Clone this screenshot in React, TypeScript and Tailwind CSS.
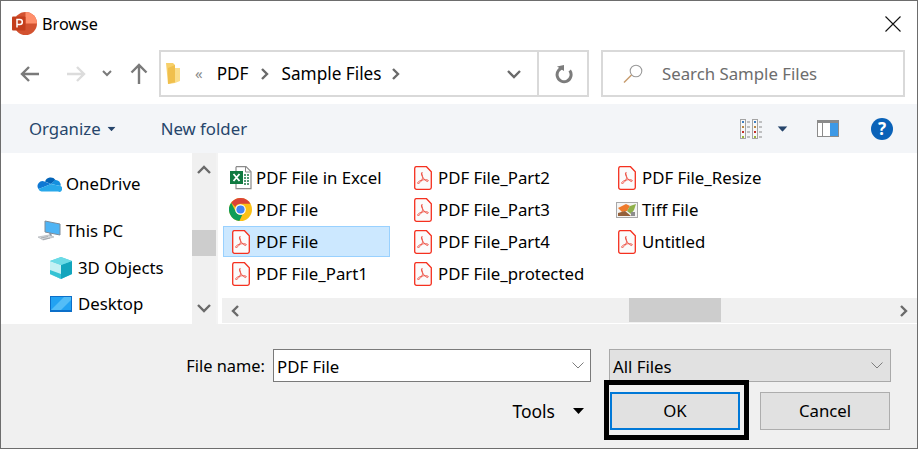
import type { ReactNode } from "react";

const font = "font-['Noto_Sans','Open_Sans',sans-serif]";

type FileEntry = { name: string; icon: "pdf" | "excel" | "chrome" | "tiff"; selected?: boolean };

const files: FileEntry[] = [
  { name: "PDF File in Excel", icon: "excel" },
  { name: "PDF File", icon: "chrome" },
  { name: "PDF File", icon: "pdf", selected: true },
  { name: "PDF File_Part1", icon: "pdf" },
  { name: "PDF File_Part2", icon: "pdf" },
  { name: "PDF File_Part3", icon: "pdf" },
  { name: "PDF File_Part4", icon: "pdf" },
  { name: "PDF File_protected", icon: "pdf" },
  { name: "PDF File_Resize", icon: "pdf" },
  { name: "Tiff File", icon: "tiff" },
  { name: "Untitled", icon: "pdf" },
];

function PdfIcon() {
  return (
    <svg width="18" height="24" viewBox="0 0 18 24" fill="none">
      <path d="M2 .7h10.500l4.800 5V21.500a1.800 1.800 0 0 1-1.800 1.800H2.500A1.800 1.800 0 0 1 .7 21.500V2.500A1.800 1.800 0 0 1 2 .7Z" fill="#fbfbfb" stroke="#f5301f" strokeWidth="1.300" />
      <path d="M8.200 6.500c-1 0-1 1.500.1 4 1 2.300-1.900 6.300-3.800 7-1.400.5-1.100-1.300.7-2.300 2.400-1.300 6.100-2 8.300-1.200 1.600.6.700 1.800-.6 1.300-1.800-.6-3.700-3-4.400-5-.6-1.800-.9-3.800-.3-3.800Z" stroke="#ec4a3c" strokeWidth=".9" />
    </svg>
  );
}

function ExcelIcon() {
  return (
    <svg width="22" height="24" viewBox="0 0 22 24" fill="none">
      <path d="M6 .7h10l5 5v17H6v-5M6 7V.7" fill="#fff" stroke="#8a8a8a" strokeWidth="1.200" />
      <path d="M15.500 1v5h5" stroke="#8a8a8a" />
      <path d="M14 9h5M14 12h5M14 15h5M14 18h5" stroke="#1f7a4a" strokeWidth="1.600" strokeDasharray="2 1" />
      <rect x="0" y="5" width="13" height="13" fill="#107a41" />
      <path d="M3.500 8l6 7M9.500 8l-6 7" stroke="#fff" strokeWidth="1.800" />
    </svg>
  );
}

function ChromeIcon() {
  return (
    <svg width="23" height="23" viewBox="0 0 24 24">
      <circle cx="12" cy="12" r="12" fill="#fbc116" />
      <path d="M12 0a12 12 0 0 1 10.400 6H12a6 6 0 0 0-5.400 3.400L2.300 4.900A12 12 0 0 1 12 0Z" fill="#db4437" />
      <path d="M2.300 4.900l4.500 8.800A6 6 0 0 0 13.800 17.700L10.800 23.900A12 12 0 0 1 2.300 4.900Z" fill="#0f9d58" />
      <circle cx="12" cy="12" r="5.500" fill="#fff" />
      <circle cx="12" cy="12" r="4.300" fill="#4285f4" />
    </svg>
  );
}

function TiffIcon() {
  return (
    <svg width="22" height="16" viewBox="0 0 22 16">
      <rect x=".5" y=".5" width="21" height="15" fill="#f4f4f4" stroke="#a8a8a8" />
      <path d="M2 6l8-4 4 2-3 5-5 1Z" fill="#ee7a2b" />
      <path d="M11 9l3-5 6-2-2 6-3 4Z" fill="#8fb04a" />
      <path d="M2 14v-3l7-2 6 5Z" fill="#94603a" />
      <rect x="15" y="10" width="4" height="4" fill="#8d8d8d" />
    </svg>
  );
}

function FileIcon({ kind }: { kind: FileEntry["icon"] }) {
  if (kind === "excel") return <ExcelIcon />;
  if (kind === "chrome") return <ChromeIcon />;
  if (kind === "tiff") return <TiffIcon />;
  return <PdfIcon />;
}

function FileRow({ file }: { file: FileEntry }) {
  const box = file.selected ? "border-[#99d1ff] bg-[#cce8ff]" : "border-transparent";
  return (
    <div className={`flex h-[31px] w-[167px] items-center border pr-1 text-[16.800px] whitespace-nowrap text-black ${box}`}>
      <div className="flex w-[32px] shrink-0 justify-center pl-[1px]">
        <FileIcon kind={file.icon} />
      </div>
      <span className="mt-[1px]">{file.name}</span>
    </div>
  );
}

function OneDriveIcon() {
  return (
    <svg width="25" height="16" viewBox="0 0 25 16">
      <path d="M8 5.500a6 6 0 0 1 10.500-1.500L14 8l-6-2.500Z" fill="#0364b8" />
      <path d="M7.500 5.500A5 5 0 0 0 1.500 13L8 10.500l6-2.500-6.500-2.500Z" fill="#0f78d4" />
      <path d="M18 4a5 5 0 0 1 5.500 6L14 8l4-4Z" fill="#1490df" />
      <path d="M1.500 13A3.500 3.500 0 0 0 4.500 15.500H21a3 3 0 0 0 2.500-5.500L14 8Z" fill="#28a8ea" />
    </svg>
  );
}

function ThisPcIcon() {
  return (
    <svg width="24" height="22" viewBox="0 0 24 22">
      <path d="M8 1l15 3v11L8 12Z" fill="#4eb4f5" stroke="#7f8c99" />
      <path d="M13 13l1 3" stroke="#8a96a3" strokeWidth="2" />
      <path d="M1 17l11-2 5 2-11 3Z" fill="#d6d9dc" stroke="#a6abb0" strokeWidth=".6" />
      <path d="M4 18l7-1.500M6 19.500l7-1.500" stroke="#9aa0a6" strokeWidth=".8" />
    </svg>
  );
}

function ObjectsIcon() {
  return (
    <svg width="22" height="22" viewBox="0 0 22 22">
      <path d="M11 0l11 4v13l-11 5L0 17V4Z" fill="#4fd0e0" />
      <path d="M0 4l11 4v14L0 17Z" fill="#c4f1f4" />
      <path d="M11 8l11-4v13l-11 5Z" fill="#12a5bd" />
      <path d="M0 13l11 4v5L0 17Z" fill="#35c3d4" />
      <path d="M11 0l11 4-11 4L0 4Z" fill="#6cdbe6" />
    </svg>
  );
}

function DesktopIcon() {
  return (
    <svg width="22" height="16" viewBox="0 0 22 16">
      <rect width="22" height="16" fill="#0c6fc9" />
      <rect x="1" y="1" width="20" height="13" fill="#22a2f2" />
      <path d="M1 14L14 1h7v3L11 14Z" fill="#53bdf7" />
    </svg>
  );
}

function NavItem({ icon, label, box }: { icon: ReactNode; label: string; box: string }) {
  return (
    <div className={`flex items-center text-[16.800px] whitespace-nowrap text-black ${box}`}>
      {icon}
      <span>{label}</span>
    </div>
  );
}

function Chevron({ d, size = 14 }: { d: string; size?: number }) {
  return (
    <svg width={size} height={size} viewBox="0 0 14 14" fill="none">
      <path d={d} stroke="#6a6a6a" strokeWidth="2.400" />
    </svg>
  );
}

function NavArrow({ d, color, className }: { d: string; color: string; className: string }) {
  return (
    <svg className={className} width="22" height="22" viewBox="0 0 22 22" fill="none">
      <path d={d} stroke={color} strokeWidth="2.400" />
    </svg>
  );
}

function Caret({ color, className }: { color: string; className?: string }) {
  return (
    <svg className={className} width="11" height="6" viewBox="0 0 11 6">
      <path d="M0 0h11L5.500 6Z" fill={color} />
    </svg>
  );
}

function SmallDown() {
  return (
    <svg width="12" height="7" viewBox="0 0 12 7" fill="none">
      <path d="M.5.500l5.500 5.500 5.500-5.500" stroke="#7d7d7d" />
    </svg>
  );
}

function ViewsIcon() {
  const rows = ["#3f7fc0", "#b88746", "#c4302b", "#9ab53c"];
  return (
    <svg width="23" height="20" viewBox="0 0 23 20" fill="none">
      {[0, 12].map((x) => (
        <g key={x}>
          <rect x={x + 0.5} y=".5" width="5" height="19" fill="#f8f8f8" stroke="#a4a4a4" />
          {rows.map((c, i) => (
            <g key={c}>
              <rect x={x + 2} y={2 + i * 5} width="2" height="2" fill={c} />
              <path d={`M${x + 7} ${3 + i * 5}h3`} stroke="#8a8a8a" />
            </g>
          ))}
        </g>
      ))}
    </svg>
  );
}

function PaneIcon() {
  return (
    <svg width="22" height="17" viewBox="0 0 22 17">
      <rect x=".5" y=".500" width="21" height="16" fill="#fff" stroke="#8b8b8b" />
      <rect x="1" y="1" width="20" height="2" fill="#8b8b8b" />
      <rect x="5" y="3" width="1" height="13" fill="#8b8b8b" />
      <rect x="13" y="3" width="8" height="13" fill="#3d99e6" />
    </svg>
  );
}

export default function App() {
  return (
    <div className={`flex h-[449px] w-[918px] flex-col overflow-hidden border border-[#6d6d6d] bg-white ${font}`}>
      {/* title bar */}
      <div className="flex h-[45px] shrink-0 items-center justify-between pr-[16px] pl-[11px]">
        <div className="flex items-center gap-[5px]">
          <svg width="25" height="23" viewBox="0 0 25 23">
            <circle cx="13.500" cy="11.500" r="11.500" fill="#d35230" />
            <path d="M13.500 0A11.500 11.500 0 0 1 25 11.500H13.500Z" fill="#ff8f6b" />
            <rect y="4.500" width="13.500" height="14" rx="1" fill="#c43e1c" />
            <path d="M5 15.500v-8h2.800a2.400 2.400 0 0 1 0 5H5" fill="none" stroke="#fff" strokeWidth="1.500" />
          </svg>
          <span className="mt-[1px] text-[16.200px] text-black">Browse</span>
        </div>
        <svg width="16" height="16" viewBox="0 0 16 16" fill="none">
          <path d="M.5.500l15 15M15.500.500l-15 15" stroke="#111" strokeWidth="1.100" />
        </svg>
      </div>

      {/* address row */}
      <div className="flex h-[58px] shrink-0 items-start pt-[4px] pr-[12px]">
        <div className="flex h-[47px] w-[158px] shrink-0 items-center">
          <NavArrow className="mt-[1px] ml-[18px]" d="M20 11H3M10 4l-7 7 7 7" color="#7a7a7a" />
          <NavArrow className="mt-[1px] ml-[24px]" d="M2 11h17M12 4l7 7-7 7" color="#dcdcdc" />
          <svg className="ml-[15px]" width="10" height="7" viewBox="0 0 10 7" fill="none">
            <path d="M1 1l4 4 4-4" stroke="#7a7a7a" strokeWidth="2" />
          </svg>
          <NavArrow className="mt-[1px] ml-[16px]" d="M11 21V2M3.500 9.500L11 2l7.500 7.500" color="#7a7a7a" />
        </div>
        <div className="flex h-[47px] w-[430px] shrink-0 items-center border-2 border-[#d9d9d9] text-[17.200px] text-black">
          <svg className="ml-[5px]" width="14" height="21" viewBox="0 0 14 21">
            <path d="M0 0h7l2 2v18l-7 1Z" fill="#f7d06a" />
            <path d="M9 5h5v13l-5 2Z" fill="#fbdd8a" />
            <path d="M2 21V5l7-3v17Z" fill="#f0bf4d" />
          </svg>
          <span className="ml-[15px] text-[15px] leading-none text-[#8a8a8a]">«</span>
          <span className="mt-[1px] ml-[14px]">PDF</span>
          <span className="mr-[10px] ml-[9px] flex"><Chevron d="M4 2l5 5-5 5" /></span>
          <span className="mt-[1px]">Sample Files</span>
          <span className="ml-[7px] flex"><Chevron d="M4 2l5 5-5 5" /></span>
          <span className="mr-[16px] ml-auto flex"><Chevron d="M1 4l6 6 6-6" /></span>
          <div className="flex h-full w-[50px] items-center justify-center border-l-2 border-[#d9d9d9] pl-[1px]">
            <svg width="20" height="20" viewBox="0 0 20 20" fill="none">
              <path d="M15.700 6.500a7 7 0 1 1-5.700-2.800H5" stroke="#7c7c7c" strokeWidth="3" />
              <path d="M3 2.500l7-1.500v6Z" fill="#7c7c7c" />
            </svg>
          </div>
        </div>
        <div className="ml-[12px] flex h-[47px] flex-1 items-center border-2 border-[#d9d9d9] pl-[20px] text-[16.800px] text-[#6d6d6d]">
          <svg width="20" height="20" viewBox="0 0 20 20" fill="none">
            <circle cx="13" cy="7" r="5.800" stroke="#9a9a9a" strokeWidth="1.100" />
            <path d="M8.500 11L1 18.500" stroke="#c79a6b" strokeWidth="1.400" />
          </svg>
          <span className="mt-[1px] ml-[19px]">Search Sample Files</span>
        </div>
      </div>

      {/* toolbar */}
      <div className="flex h-[49px] shrink-0 items-center bg-[#f3f5f8] pr-[24px] pl-[28px] text-[16.800px] text-[#26456b]">
        <span className="mt-[1px]">Organize</span>
        <Caret color="#26456b" className="ml-[5px] scale-75" />
        <span className="mt-[1px] ml-[44px]">New folder</span>
        <div className="ml-auto flex items-center">
          <ViewsIcon />
          <Caret color="#26456b" className="ml-[14px] scale-90" />
          <div className="ml-[29px]"><PaneIcon /></div>
          <div className="ml-[32px] flex h-[22px] w-[22px] items-center justify-center rounded-full bg-[#0a62b8] text-[17px] font-bold text-white">?</div>
        </div>
      </div>

      {/* content */}
      <div className="flex h-[171px] shrink-0">
        <div className="w-[191px] shrink-0 pt-[15px]">
          <NavItem icon={<div className="flex w-[29px] shrink-0"><OneDriveIcon /></div>} label="OneDrive" box="h-[32px] pl-[36px]" />
          <div className="h-[15px]" />
          <NavItem icon={<div className="flex w-[29px] shrink-0"><ThisPcIcon /></div>} label="This PC" box="h-[32px] pl-[36px]" />
          <NavItem icon={<div className="flex w-[28px] shrink-0"><ObjectsIcon /></div>} label="3D Objects" box="mt-[3px] h-[36px] pl-[49px]" />
          <NavItem icon={<div className="flex w-[28px] shrink-0"><DesktopIcon /></div>} label="Desktop" box="h-[36px] pl-[49px]" />
        </div>

        <div className="flex w-[24px] shrink-0 flex-col bg-[#f0f0f0]">
          <div className="flex h-[32px] items-center justify-center pt-[2px]"><Chevron d="M1 10l6-6 6 6" /></div>
          <div className="mt-[45px] h-[26px] bg-[#cdcdcd]" />
          <div className="mt-auto flex h-[32px] items-center justify-center"><Chevron d="M1 4l6 6 6-6" /></div>
        </div>
        <div className="w-[2px] shrink-0 bg-[#f3f3f3]" />

        <div className="flex min-w-0 flex-1 flex-col">
          <div className="grid h-[145px] grid-flow-col grid-cols-[182px_204px_1fr] grid-rows-[32px_32px_32px_32px] content-start pt-[9px] pl-[5px]">
            {files.map((file, i) => (
              <FileRow key={i} file={file} />
            ))}
          </div>
          <div className="ml-[4px] flex h-[25px] items-center bg-[#f0f0f0]">
            <div className="flex w-[28px] justify-center"><Chevron d="M9 2L4 7l5 5" /></div>
            <div className="ml-[379px] h-[24px] w-[92px] self-start bg-[#cdcdcd]" />
            <div className="ml-auto flex w-[28px] justify-center"><Chevron d="M5 2l5 5-5 5" /></div>
          </div>
        </div>
      </div>

      {/* footer */}
      <div className="flex min-h-0 flex-1 flex-col bg-[#f0f0f0] pt-[25px] text-[16.800px] text-black">
        <div className="flex h-[33px] items-center justify-end pr-[26px]">
          <span className="mt-[1px] mr-[8px] text-[16.400px]">File name:</span>
          <div className="flex h-[33px] w-[318px] items-center justify-between border border-[#7a7a7a] bg-white pr-[6px] pl-[3px]">
            <span className="mt-[2px]">PDF File</span>
            <SmallDown />
          </div>
          <div className="ml-[18px] flex h-[33px] w-[282px] items-center justify-between border border-[#a9a9a9] bg-[#e1e1e1] pr-[7px] pl-[3px]">
            <span className="mt-[2px]">All Files</span>
            <SmallDown />
          </div>
        </div>
        <div className="mt-[10px] flex h-[38px] items-center justify-end pr-[27px]">
          <span className="text-[17.500px]">Tools</span>
          <Caret color="#000" className="mr-[26px] ml-[18px]" />
          <div className="relative">
            <button className="flex h-[38px] w-[130px] items-center justify-center border-2 border-[#0078d7] bg-[#e1e1e1]">OK</button>
            <div className="pointer-events-none absolute -top-[12px] -right-[9px] -bottom-[10px] -left-[6px] border-[5px] border-black" />
          </div>
          <button className="ml-[20px] flex h-[38px] w-[130px] items-center justify-center border border-[#adadad] bg-[#e1e1e1]">Cancel</button>
        </div>
      </div>
    </div>
  );
}
